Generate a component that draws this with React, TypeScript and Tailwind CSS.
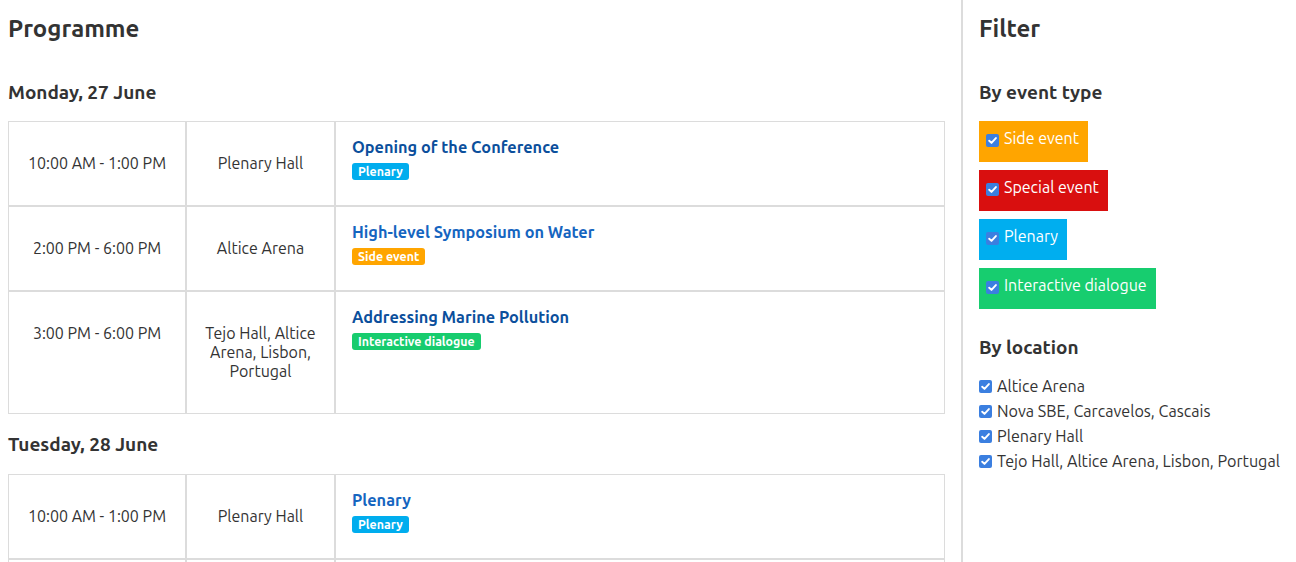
import React from "react";

type Ev = {
  time: string;
  loc: string;
  title: string;
  titleColor: string;
  tag: string;
  tagColor: string;
};

const monday: Ev[] = [
  { time: "10:00 AM - 1:00 PM", loc: "Plenary Hall", title: "Opening of the Conference", titleColor: "text-[#0b4f9c]", tag: "Plenary", tagColor: "bg-[#00adee]" },
  { time: "2:00 PM - 6:00 PM", loc: "Altice Arena", title: "High-level Symposium on Water", titleColor: "text-[#1565c0]", tag: "Side event", tagColor: "bg-[#ffa500]" },
  { time: "3:00 PM - 6:00 PM", loc: "Tejo Hall, Altice Arena, Lisbon, Portugal", title: "Addressing Marine Pollution", titleColor: "text-[#0b4f9c]", tag: "Interactive dialogue", tagColor: "bg-[#17cc6e]" },
];

const tuesday: Ev[] = [
  { time: "10:00 AM - 1:00 PM", loc: "Plenary Hall", title: "Plenary", titleColor: "text-[#1565c0]", tag: "Plenary", tagColor: "bg-[#00adee]" },
  { time: "", loc: "", title: "", titleColor: "", tag: "", tagColor: "" },
];

function Check() {
  return (
    <span className="inline-flex h-[13px] w-[13px] shrink-0 items-center justify-center rounded-[2px] bg-[#3b7fe0]">
      <svg viewBox="0 0 12 12" className="h-[11px] w-[11px]" fill="none" stroke="white" strokeWidth="2.1" strokeLinecap="round" strokeLinejoin="round">
        <path d="M2.4 6.2 L4.9 8.6 L9.7 3.3" />
      </svg>
    </span>
  );
}

function Row({ ev }: { ev: Ev }) {
  const cell = "border border-[#dcdcdc] flex items-start justify-center text-center px-[16px] pt-[32px] pb-[31px] leading-[19.2px]";
  return (
    <>
      <div className={`${cell} min-h-[85px]`}>{ev.time}</div>
      <div className={`${cell} min-h-[85px]`}>{ev.loc}</div>
      <div className="min-h-[85px] border border-[#dcdcdc] px-[16px] pt-[15px] pb-[8px]">
        {ev.title && (
          <>
            <div className={`text-[16.3px] font-bold leading-[20px] ${ev.titleColor}`}>{ev.title}</div>
            <span className={`mt-[6px] inline-block rounded-[3px] px-[6px] text-[12.4px] font-bold leading-[17px] text-white ${ev.tagColor}`}>
              {ev.tag}
            </span>
          </>
        )}
      </div>
    </>
  );
}

function Table({ rows }: { rows: Ev[] }) {
  return (
    <div className="grid grid-cols-[178px_149px_610px] text-[16px] leading-[20px] text-[#333]">
      {rows.map((r, i) => (
        <Row key={i} ev={r} />
      ))}
    </div>
  );
}

const types = [
  { label: "Side event", color: "bg-[#ffa500]" },
  { label: "Special event", color: "bg-[#d90f0f]" },
  { label: "Plenary", color: "bg-[#00aeef]" },
  { label: "Interactive dialogue", color: "bg-[#17cd6f]" },
];

const locations = [
  "Altice Arena",
  "Nova SBE, Carcavelos, Cascais",
  "Plenary Hall",
  "Tejo Hall, Altice Arena, Lisbon, Portugal",
];

export default function App() {
  return (
    <div
      className="flex h-[562px] w-[1296px] overflow-hidden bg-white text-[#333]"
      style={{ fontFamily: "Ubuntu, 'Noto Sans', 'Open Sans', sans-serif" }}
    >
      <main className="w-[961px] shrink-0 pl-[8px] pr-[16px]">
        <h2 className="mt-[14px] text-[24px] font-bold leading-[30px]">Programme</h2>
        <h3 className="mt-[36px] text-[19px] font-bold leading-[24px]">Monday, 27 June</h3>
        <div className="mt-[17px]">
          <Table rows={monday} />
        </div>
        <h3 className="mt-[18px] text-[19px] font-bold leading-[24px]">Tuesday, 28 June</h3>
        <div className="mt-[18px]">
          <Table rows={tuesday} />
        </div>
      </main>
      <aside className="flex-1 border-l-2 border-[#dcdcdc] pl-[16px]">
        <h2 className="mt-[14px] text-[24px] font-bold leading-[30px]">Filter</h2>
        <h3 className="mt-[36px] text-[19px] font-bold leading-[24px]">By event type</h3>
        <div className="mt-[17px] flex flex-col items-start gap-[8px]">
          {types.map((t) => (
            <label key={t.label} className={`flex items-center gap-[5px] pl-[7px] pr-[9px] pt-[5px] pb-[11px] text-[16px] leading-[25px] text-white ${t.color}`}>
              <span className="mt-[3px] flex"><Check /></span>
              {t.label}
            </label>
          ))}
        </div>
        <h3 className="mt-[26px] text-[19px] font-bold leading-[24px]">By location</h3>
        <div className="mt-[15px] flex flex-col">
          {locations.map((l) => (
            <label key={l} className="flex items-center gap-[5px] text-[16.15px] leading-[25px]">
              <Check />
              {l}
            </label>
          ))}
        </div>
      </aside>
    </div>
  );
}
